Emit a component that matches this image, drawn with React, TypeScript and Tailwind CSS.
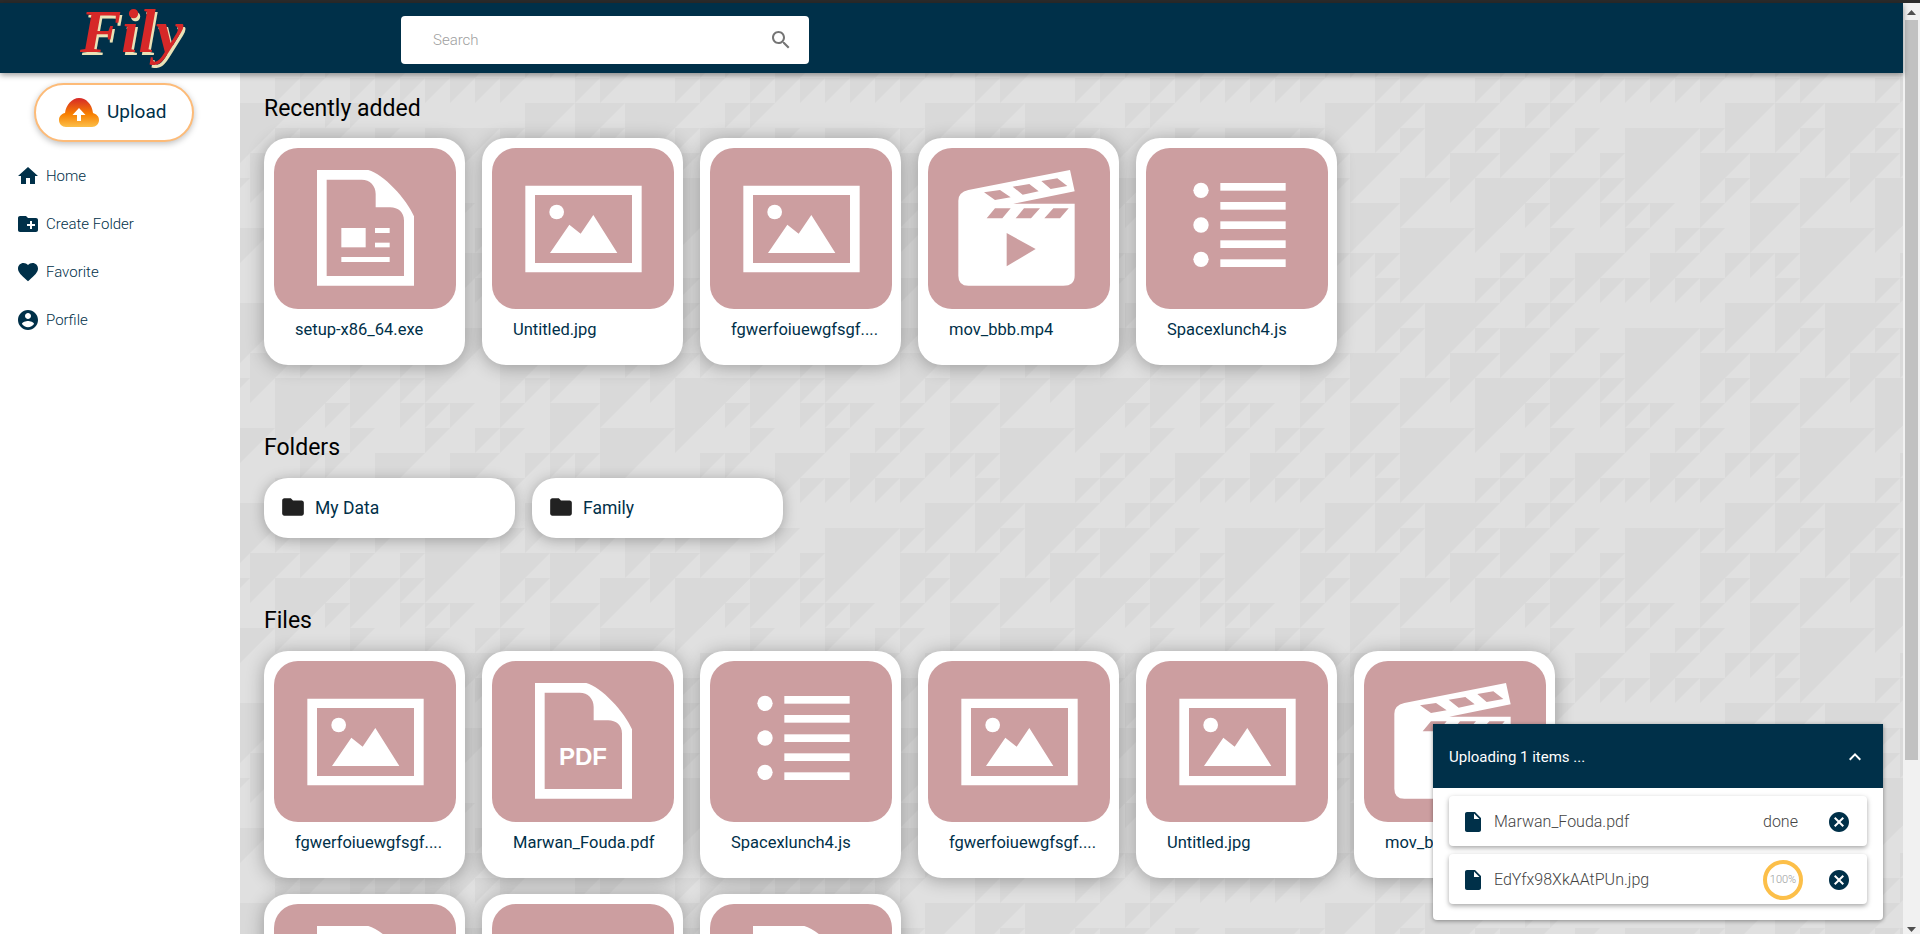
type FileKind = 'doc' | 'image' | 'video' | 'list' | 'pdf';

interface FileItem {
  name: string;
  kind: FileKind;
}

const recent: FileItem[] = [
  { name: 'setup-x86_64.exe', kind: 'doc' },
  { name: 'Untitled.jpg', kind: 'image' },
  { name: 'fgwerfoiuewgfsgf....', kind: 'image' },
  { name: 'mov_bbb.mp4', kind: 'video' },
  { name: 'Spacexlunch4.js', kind: 'list' },
];

// the last three cards run off the bottom of the window, their names are out of sight
const files: FileItem[] = [
  { name: 'fgwerfoiuewgfsgf....', kind: 'image' },
  { name: 'Marwan_Fouda.pdf', kind: 'pdf' },
  { name: 'Spacexlunch4.js', kind: 'list' },
  { name: 'fgwerfoiuewgfsgf....', kind: 'image' },
  { name: 'Untitled.jpg', kind: 'image' },
  { name: 'mov_bbb.mp4', kind: 'video' },
  { name: '', kind: 'doc' },
  { name: '', kind: 'image' },
  { name: '', kind: 'doc' },
];

// [column, row, size] of the darker triangles in the 400x200 background tile
const triangles: [number, number, number][] = [
  [0, 0, 2], [3, 0, 1], [5, 0, 3], [8, 0, 1], [12, 0, 1], [15, 0, 1],
  [2, 1, 1], [4, 1, 1], [8, 1, 2], [10, 1, 2], [14, 1, 2],
  [0, 2, 2], [2, 2, 2], [4, 2, 1], [9, 2, 1], [12, 2, 2], [15, 2, 3],
  [1, 3, 1], [4, 3, 1], [5, 3, 1], [6, 3, 1], [8, 3, 1], [10, 3, 2],
  [2, 4, 1], [5, 4, 1], [7, 4, 1], [8, 4, 1], [12, 4, 3],
  [0, 5, 1], [1, 5, 1], [3, 5, 2], [6, 5, 2], [9, 5, 1], [10, 5, 1], [11, 5, 1],
  [0, 6, 1], [2, 6, 1], [4, 6, 1], [5, 6, 1], [7, 6, 1], [8, 6, 1], [11, 6, 1], [15, 6, 1],
  [1, 7, 1], [2, 7, 1], [9, 7, 2], [11, 7, 2], [13, 7, 3],
];

const shifts: [number, number][] = [[0, 0], [-400, 0], [0, -200], [-400, -200]];

function Pattern() {
  return (
    <svg className="absolute inset-0 w-full h-full" aria-hidden="true">
      <defs>
        <pattern id="tile" x="60" y="55" width="400" height="200" patternUnits="userSpaceOnUse">
          <rect width="400" height="200" fill="#e0e0e0" />
          {shifts.map(([dx, dy]) =>
            triangles.map(([c, r, s]) => {
              const x = c * 25 + dx;
              const y = r * 25 + dy;
              return (
                <polygon
                  key={`${dx}-${dy}-${c}-${r}`}
                  points={`${x},${y} ${x + s * 25},${y} ${x},${y + s * 25}`}
                  fill="#d9d9d9"
                />
              );
            }),
          )}
        </pattern>
      </defs>
      <rect width="100%" height="100%" fill="url(#tile)" />
    </svg>
  );
}

function MaterialIcon({ d, className }: { d: string; className: string }) {
  return (
    <svg viewBox="0 0 24 24" fill="currentColor" className={className}>
      <path d={d} />
    </svg>
  );
}

const icons = {
  home: 'M10 20v-6h4v6h5v-8h3L12 3 2 12h3v8z',
  newFolder:
    'M20 6h-8l-2-2H4c-1.11 0-1.99.89-1.99 2L2 18c0 1.11.89 2 2 2h16c1.11 0 2-.89 2-2V8c0-1.11-.89-2-2-2zm-1 8h-3v3h-2v-3h-3v-2h3V9h2v3h3v2z',
  heart:
    'M12 21.35l-1.45-1.32C5.4 15.36 2 12.28 2 8.5 2 5.42 4.42 3 7.5 3c1.74 0 3.41.81 4.5 2.09C13.09 3.81 14.76 3 16.5 3 19.58 3 22 5.42 22 8.5c0 3.78-3.4 6.86-8.55 11.54L12 21.35z',
  account:
    'M12 2C6.48 2 2 6.48 2 12s4.48 10 10 10 10-4.48 10-10S17.52 2 12 2zm0 3c1.66 0 3 1.34 3 3s-1.34 3-3 3-3-1.34-3-3 1.34-3 3-3zm0 14.2c-2.5 0-4.71-1.28-6-3.22.03-1.99 4-3.08 6-3.08 1.99 0 5.97 1.09 6 3.08-1.29 1.94-3.5 3.22-6 3.22z',
  folder: 'M10 4H4c-1.1 0-1.99.9-1.99 2L2 18c0 1.1.9 2 2 2h16c1.1 0 2-.9 2-2V8c0-1.1-.9-2-2-2h-8l-2-2z',
  file: 'M6 2c-1.1 0-1.99.9-1.99 2L4 20c0 1.1.89 2 1.99 2H18c1.1 0 2-.9 2-2V8l-6-6H6zm7 7V3.5L18.5 9H13z',
  cancel:
    'M12 2C6.47 2 2 6.47 2 12s4.47 10 10 10 10-4.47 10-10S17.53 2 12 2zm5 13.59L15.59 17 12 13.41 8.41 17 7 15.59 10.59 12 7 8.41 8.41 7 12 10.59 15.59 7 17 8.41 13.41 12 17 15.59z',
  chevronUp: 'M12 8l-6 6 1.41 1.41L12 10.83l4.59 4.58L18 14z',
  search:
    'M15.5 14h-.79l-.28-.27C15.41 12.59 16 11.11 16 9.5 16 5.91 13.09 3 9.5 3S3 5.91 3 9.5 5.91 16 9.5 16c1.61 0 3.09-.59 4.23-1.57l.27.28v.79l5 4.99L20.49 19l-4.99-5zm-6 0C7.01 14 5 11.99 5 9.5S7.01 5 9.5 5 14 7.01 14 9.5 11.99 14 9.5 14z',
};

const docShape =
  'M186 123H340C385 135 455 210 477 262V470H186ZM215 152V441H447V275C447 250 430 235 405 235H362V195C362 170 345 152 320 152Z';

function FileGlyph({ kind }: { kind: FileKind }) {
  const box = 'w-[182px] h-[161px] text-white';
  if (kind === 'image') {
    return (
      <svg viewBox="711 57 546 483" className={box} fill="currentColor">
        <path fillRule="evenodd" d="M811 170H1160V430H811ZM840 198V402H1131V198Z" />
        <circle cx="905" cy="249" r="22" />
        <polygon points="885,372 943,287 977,314 1015,258 1087,372" />
      </svg>
    );
  }
  if (kind === 'video') {
    return (
      <svg viewBox="84 57 546 483" className={box} fill="currentColor">
        <path
          fillRule="evenodd"
          d="M175 215Q175 190 205 183L510 123L524 187L340 224H524V440Q524 470 490 470H205Q175 470 175 440ZM252 190L285 213L332 205L300 183ZM338 173L368 197L416 187L388 165ZM424 156L452 180L502 171L472 148ZM285 238L260 268H307L332 238ZM372 238L347 268H393L420 238ZM460 238L433 268H480L506 238ZM320 312V412L407 360Z"
        />
      </svg>
    );
  }
  if (kind === 'list') {
    return (
      <svg viewBox="738 57 546 483" className={box} fill="currentColor">
        <circle cx="903" cy="184" r="23" />
        <circle cx="903" cy="288" r="23" />
        <circle cx="903" cy="391" r="23" />
        <rect x="961" y="162" width="196" height="23" />
        <rect x="961" y="219" width="196" height="23" />
        <rect x="961" y="277" width="196" height="23" />
        <rect x="961" y="334" width="196" height="23" />
        <rect x="961" y="391" width="196" height="23" />
      </svg>
    );
  }
  return (
    <svg viewBox="57 57 546 483" className={box} fill="currentColor">
      <path fillRule="evenodd" d={docShape} />
      {kind === 'doc' ? (
        <>
          <rect x="259" y="297" width="73" height="58" />
          <rect x="360" y="297" width="44" height="15" />
          <rect x="360" y="341" width="44" height="14" />
          <rect x="259" y="384" width="145" height="15" />
        </>
      ) : (
        <text x="330" y="370" textAnchor="middle" fontSize="72" fontWeight="700" className="[font-family:'Liberation_Sans',sans-serif]">
          PDF
        </text>
      )}
    </svg>
  );
}

function FileCard({ file }: { file: FileItem }) {
  return (
    <div className="w-[201px] h-[227px] bg-white rounded-[24px] p-[10px] shadow-[0_2px_18px_rgba(0,0,0,0.3)]">
      <div className="w-[182px] h-[161px] rounded-[24px] bg-[#cc9ea0]">
        <FileGlyph kind={file.kind} />
      </div>
      <p className="mt-[11px] pl-[21px] text-[16.5px] leading-[20px] text-[#003049] whitespace-nowrap">{file.name}</p>
    </div>
  );
}

function FolderCard({ name }: { name: string }) {
  return (
    <div className="w-[251px] h-[60px] bg-white rounded-[24px] flex items-center pl-[16px] shadow-[0_2px_14px_rgba(0,0,0,0.28)]">
      <MaterialIcon d={icons.folder} className="w-[26px] h-[26px] -mt-[2px] text-[#212121]" />
      <span className="ml-[9px] text-[17.500px] text-[#003049]">{name}</span>
    </div>
  );
}

function NavItem({ icon, label }: { icon: string; label: string }) {
  return (
    <div className="h-[48px] flex items-center pl-[16px] text-[#003049]">
      <MaterialIcon d={icon} className="w-[24px] h-[24px]" />
      <span className="ml-[6px] text-[15px] font-light">{label}</span>
    </div>
  );
}

function UploadRow({ name, done }: { name: string; done?: boolean }) {
  return (
    <div className="h-[50px] flex items-center bg-white rounded-[4px] pl-[12px] pr-[16px] pt-[2px] shadow-[0_2px_5px_rgba(0,0,0,0.35)]">
      <MaterialIcon d={icons.file} className="w-[24px] h-[24px] text-[#003049]" />
      <span className="ml-[9px] flex-1 text-[16px] font-light text-[#444]">{name}</span>
      {done ? (
        <span className="w-[40px] text-[16px] font-light text-[#444]">done</span>
      ) : (
        <div className="w-[40px] h-[40px] rounded-full border-[4px] border-[#fcbf49] flex items-center justify-center text-[11px] font-light text-[#999]">
          100%
        </div>
      )}
      <MaterialIcon d={icons.cancel} className="ml-[24px] w-[24px] h-[24px] text-[#003049]" />
    </div>
  );
}

function UploadPanel() {
  return (
    <div className="absolute right-[20px] bottom-[14px] w-[450px] bg-white rounded-b-[4px] shadow-[0_1px_4px_rgba(0,0,0,0.4)]">
      <div className="h-[64px] bg-[#003049] flex items-center justify-between px-[16px] pt-[2px] text-white">
        <span className="text-[15px]">Uploading 1 items ...</span>
        <MaterialIcon d={icons.chevronUp} className="w-[24px] h-[24px]" />
      </div>
      <div className="px-[16px] pt-[8px] pb-[16px] flex flex-col gap-[8px]">
        <UploadRow name="Marwan_Fouda.pdf" done />
        <UploadRow name="EdYfx98XkAAtPUn.jpg" />
      </div>
    </div>
  );
}

function Scrollbar() {
  return (
    <div className="w-[17px] bg-[#f1f1f1] flex flex-col items-center">
      <svg viewBox="0 0 9 5" className="w-[9px] h-[5px] mt-[7px] mb-[5px] text-[#505050]" fill="currentColor">
        <polygon points="4.5,0 9,5 0,5" />
      </svg>
      <div className="w-[13px] h-[740px] bg-[#c1c1c1]" />
      <svg viewBox="0 0 9 5" className="w-[9px] h-[5px] mt-auto mb-[2px] text-[#505050]" fill="currentColor">
        <polygon points="0,0 9,0 4.5,5" />
      </svg>
    </div>
  );
}

export default function App() {
  return (
    <div className="h-[934px] overflow-hidden flex flex-col [font-family:Roboto,sans-serif]">
      <div className="h-[3px] bg-[#2b2b2b]" />
      <div className="flex-1 flex min-h-0">
        <div className="flex-1 flex flex-col min-w-0">
          <header className="relative z-10 h-[70px] bg-[#003049] flex items-center shadow-[0_2px_6px_rgba(0,0,0,0.4)]">
            <div className="w-[401px] pl-[80px] -mt-[14px]">
              <span className="text-[62px] leading-[56px] font-bold italic text-[#d62828] [font-family:'Liberation_Serif',serif] [text-shadow:2px_3px_0_#eae2b7]">
                Fily
              </span>
            </div>
            <div className="w-[408px] h-[48px] mt-[4px] bg-white rounded-[4px] flex items-center pl-[32px] pr-[16px]">
              <span className="flex-1 text-[15px] font-light text-[#9e9e9e]">Search</span>
              <MaterialIcon d={icons.search} className="w-[24px] h-[24px] text-[#757575]" />
            </div>
          </header>

          <div className="flex-1 flex min-h-0">
            <aside className="w-[240px] bg-white pt-[10px]">
              <button className="ml-[34px] w-[160px] h-[59px] rounded-full border-2 border-[#fdbb78] bg-white flex items-center pl-[23px] shadow-[0_2px_6px_rgba(0,0,0,0.25)]">
                <svg viewBox="0 0 40 30" className="w-[40px] h-[30px]">
                  <defs>
                    <linearGradient id="cloud" x1="0" y1="0" x2="0" y2="1">
                      <stop offset="0" stopColor="#d62828" />
                      <stop offset="0.55" stopColor="#f77f00" />
                      <stop offset="1" stopColor="#fcbf49" />
                    </linearGradient>
                  </defs>
                  <path
                    fill="url(#cloud)"
                    d="M7 29C3 29 0 26 0 22C0 18 3 15.500 6 15C7 7 13 0 20 0C27 0 33 6 34 15C37 16 40 18 40 22C40 26 37 29 33 29Z"
                  />
                  <polygon fill="#fff" points="20,10 26.500,17 22,17 22,23 18,23 18,17 13.500,17" />
                </svg>
                <span className="ml-[8px] text-[19px] text-[#003049]">Upload</span>
              </button>
              <nav className="mt-[10px]">
                <NavItem icon={icons.home} label="Home" />
                <NavItem icon={icons.newFolder} label="Create Folder" />
                <NavItem icon={icons.heart} label="Favorite" />
                <NavItem icon={icons.account} label="Porfile" />
              </nav>
            </aside>

            <main className="relative flex-1 overflow-hidden">
              <Pattern />
              <div className="relative pl-[24px] pt-[20px]">
                <section>
                  <h2 className="h-[30px] leading-[32px] text-[23px] text-black">Recently added</h2>
                  <div className="mt-[15px] flex gap-[17px]">
                    {recent.map((f, i) => (
                      <FileCard key={i} file={f} />
                    ))}
                  </div>
                </section>
                <section className="mt-[67px]">
                  <h2 className="h-[30px] leading-[32px] text-[23px] text-black">Folders</h2>
                  <div className="mt-[16px] flex gap-[17px]">
                    <FolderCard name="My Data" />
                    <FolderCard name="Family" />
                  </div>
                </section>
                <section className="mt-[67px]">
                  <h2 className="h-[30px] leading-[32px] text-[23px] text-black">Files</h2>
                  <div className="mt-[16px] w-[1400px] flex flex-wrap gap-x-[17px] gap-y-[16px]">
                    {files.map((f, i) => (
                      <FileCard key={i} file={f} />
                    ))}
                  </div>
                </section>
              </div>
              <UploadPanel />
            </main>
          </div>
        </div>
        <Scrollbar />
      </div>
    </div>
  );
}
